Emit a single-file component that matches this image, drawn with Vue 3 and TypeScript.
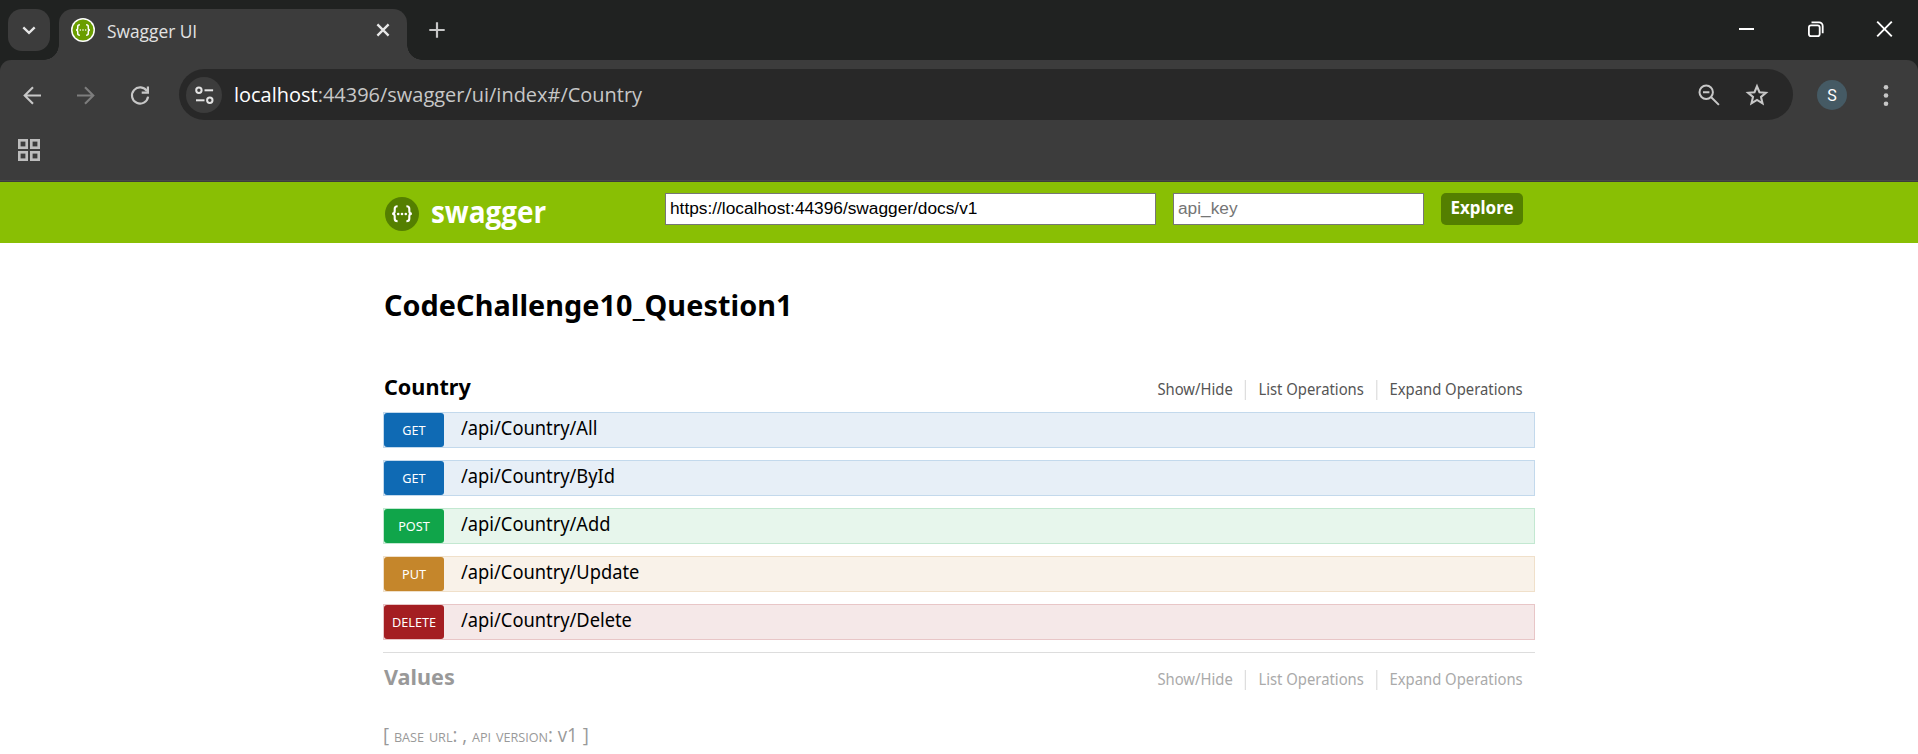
<script setup lang="ts">
interface Operation {
  method: 'get' | 'post' | 'put' | 'delete'
  path: string
}

const operations: Operation[] = [
  { method: 'get', path: '/api/Country/All' },
  { method: 'get', path: '/api/Country/ById' },
  { method: 'post', path: '/api/Country/Add' },
  { method: 'put', path: '/api/Country/Update' },
  { method: 'delete', path: '/api/Country/Delete' },
]

const options: string[] = ['Show/Hide', 'List Operations', 'Expand Operations']
const docsUrl: string = 'https://localhost:44396/swagger/docs/v1'
</script>

<template>
  <div class="window">
    <div class="tabstrip">
      <div class="tab-search">
        <svg width="24" height="24" viewBox="0 0 24 24" fill="none" stroke="#e6e6e6" stroke-width="2.3">
          <path d="M6.3 9.3 12 14.8l5.7-5.5" />
        </svg>
      </div>
      <div class="tab">
        <svg width="24" height="24" viewBox="0 0 24 24">
          <circle cx="12" cy="12" r="12" fill="#fff" />
          <circle cx="12" cy="12" r="10.5" fill="#6a9e00" />
          <g fill="none" stroke="#fff" stroke-width="1.5">
            <path d="M8.900 6.700c-1.800 0-2.200.5-2.200 2v1.500c0 1.200-.4 1.800-1.700 1.800 1.300 0 1.700.6 1.700 1.800v1.500c0 1.500.4 2 2.200 2" />
            <path d="M15.100 6.700c1.800 0 2.200.5 2.200 2v1.500c0 1.200.4 1.800 1.700 1.800-1.300 0-1.700.6-1.700 1.800v1.500c0 1.500-.4 2-2.200 2" />
          </g>
          <g fill="#fff">
            <circle cx="9.3" cy="12" r=".8" /><circle cx="12" cy="12" r=".8" /><circle cx="14.7" cy="12" r=".8" />
          </g>
        </svg>
        <span class="tab-title">Swagger UI</span>
        <svg width="24" height="24" viewBox="0 0 24 24" stroke="#e8e8e8" stroke-width="2.3">
          <path d="m6.400 6.400 11.200 11.200M17.600 6.400 6.400 17.600" />
        </svg>
      </div>
      <svg class="new-tab" width="24" height="24" viewBox="0 0 24 24" stroke="#c7c7c7" stroke-width="2.2">
        <path d="M12 4.300v15.400M4.300 12h15.400" />
      </svg>
      <div class="window-buttons">
        <svg width="24" height="24" viewBox="0 0 24 24" stroke="#fff" stroke-width="2">
          <path d="M4 12h15" />
        </svg>
        <svg width="24" height="24" viewBox="0 0 24 24" fill="none" stroke="#fff" stroke-width="1.8">
          <rect x="4.900" y="8.400" width="10.800" height="10.700" rx="2.200" />
          <path d="M7.500 5.400h7.600a3.600 3.600 0 0 1 3.600 3.600v7.300" />
        </svg>
        <svg width="24" height="24" viewBox="0 0 24 24" stroke="#fff" stroke-width="1.9">
          <path d="m4.200 4.700 14.600 14.600M18.800 4.700 4.200 19.300" />
        </svg>
      </div>
    </div>

    <div class="chrome">
      <div class="toolbar">
        <svg width="24" height="24" viewBox="0 0 24 24" fill="none" stroke="#c7c7c7" stroke-width="2.1">
          <path d="M21 12.500H4.600M13 4.200 4.700 12.500l8.300 8.300" />
        </svg>
        <svg width="24" height="24" viewBox="0 0 24 24" fill="none" stroke="#7d7d7d" stroke-width="2.1">
          <path d="M3 12.500h16.400M11 4.200l8.300 8.300-8.300 8.300" />
        </svg>
        <svg width="24" height="24" viewBox="0 0 24 24" fill="none" stroke="#c7c7c7" stroke-width="2.2">
          <path d="M20.100 13.700A8.100 8.100 0 1 1 19 8.300" />
          <path d="M19.900 3.600v6h-6.200" />
        </svg>
        <div class="omnibox">
          <div class="site-info">
            <svg width="24" height="24" viewBox="0 0 24 24" fill="none" stroke="#e3e3e3" stroke-width="2">
              <circle cx="6.900" cy="7.300" r="2.700" /><path d="M12.500 7.300h8.600" />
              <circle cx="17.800" cy="17.300" r="2.700" /><path d="M4 17.300h8.500" />
            </svg>
          </div>
          <div class="url"><span class="host">localhost</span>:44396/swagger/ui/index#/Country</div>
          <svg width="24" height="24" viewBox="0 0 24 24" fill="none" stroke="#c7c7c7" stroke-width="2">
            <circle cx="9.200" cy="9.200" r="6.700" /><path d="m14 14 7.900 7.900M6 9.200h6.400" />
          </svg>
          <svg class="star" width="24" height="24" viewBox="0 0 24 24" fill="none" stroke="#c7c7c7" stroke-width="2.1">
            <path d="m12 3.300 2.500 5.900 6.400.6-4.900 4.200 1.500 6.300-5.500-3.400-5.500 3.400 1.500-6.300-4.900-4.200 6.400-.6z" />
          </svg>
        </div>
        <div class="avatar">S</div>
        <svg class="menu" width="24" height="24" viewBox="0 0 24 24" fill="#c7c7c7">
          <circle cx="12" cy="4.200" r="2.300" /><circle cx="12" cy="12.500" r="2.300" /><circle cx="12" cy="20.800" r="2.300" />
        </svg>
      </div>
      <div class="bookmarks">
        <svg width="22" height="22" viewBox="0 0 22 22" fill="none" stroke="#bdbdbd" stroke-width="2.6">
          <rect x="1.300" y="1.300" width="7.400" height="7.400" /><rect x="13.300" y="1.300" width="7.400" height="7.400" />
          <rect x="1.300" y="13.300" width="7.400" height="7.400" /><rect x="13.300" y="13.300" width="7.400" height="7.400" />
        </svg>
      </div>
    </div>

    <div class="page">
      <header class="header">
        <div class="container header-row">
          <div class="logo">
            <svg width="34" height="34" viewBox="0 0 34 34">
              <circle cx="17" cy="17" r="17" fill="#547f00" />
              <g fill="none" stroke="#fff" stroke-width="2.1">
                <path d="M12.600 9.300c-2.300 0-2.900.6-2.900 2.500v2.500c0 1.700-.7 2.500-2.600 2.500 1.900 0 2.600.8 2.600 2.500v2.500c0 1.900.6 2.500 2.900 2.500" />
                <path d="M21.400 9.300c2.300 0 2.900.6 2.900 2.500v2.500c0 1.700.7 2.500 2.600 2.500-1.900 0-2.600.8-2.600 2.500v2.500c0 1.900-.6 2.500-2.900 2.500" />
              </g>
              <g fill="#fff">
                <circle cx="13.200" cy="17" r="1.300" /><circle cx="17" cy="17" r="1.300" /><circle cx="20.800" cy="17" r="1.300" />
              </g>
            </svg>
            <span>swagger</span>
          </div>
          <input class="field base-url" type="text" :value="docsUrl" />
          <input class="field api-key" type="text" placeholder="api_key" />
          <a class="explore">Explore</a>
        </div>
      </header>

      <main class="container">
        <h1 class="title">CodeChallenge10_Question1</h1>

        <section class="resource">
          <div class="heading">
            <h2>Country</h2>
            <ul class="options"><li v-for="o in options" :key="o">{{ o }}</li></ul>
          </div>
          <div v-for="op in operations" :key="op.path" class="operation" :class="op.method">
            <span class="method">{{ op.method.toUpperCase() }}</span>
            <span class="path">{{ op.path }}</span>
          </div>
        </section>

        <section class="resource collapsed">
          <div class="heading">
            <h2>Values</h2>
            <ul class="options"><li v-for="o in options" :key="o">{{ o }}</li></ul>
          </div>
        </section>

        <footer class="footer">[ <span class="caps">base url</span>: , <span class="caps">api version</span>: v1 ]</footer>
      </main>
    </div>
  </div>
</template>

<style>
body { margin: 0; overflow: hidden; background: #fff; }
</style>

<style scoped>
.window { display: flex; flex-direction: column; height: 754px; overflow: hidden; background: #202221; font-family: "Open Sans", "Noto Sans", sans-serif; }
svg { display: block; flex: none; }

.tabstrip { display: flex; flex: none; align-items: flex-start; height: 60px; box-sizing: border-box; padding: 9px 14px 0 8px; }
.tab-search { display: flex; align-items: center; justify-content: center; width: 42px; height: 42px; border-radius: 14px; background: #3c3c3c; }
.tab { position: relative; display: flex; align-items: center; box-sizing: border-box; width: 348px; height: 51px; margin-left: 9px; padding: 0 12px 9px; border-radius: 14px 14px 0 0; background: #3c3c3c; }
.tab::before, .tab::after { content: ""; position: absolute; bottom: 0; width: 15px; height: 15px; }
.tab::before { right: 100%; background: radial-gradient(circle at 0 0, transparent 14.5px, #3c3c3c 15px); }
.tab::after { left: 100%; background: radial-gradient(circle at 100% 0, transparent 14.5px, #3c3c3c 15px); }
.tab-title { flex: 1; margin: 2px 0 0 12px; color: #e3e3e3; font-size: 18px; line-height: 24px; transform: scaleX(.963); transform-origin: 0 50%; }
.new-tab { margin: 9px 0 0 18px; }
.window-buttons { display: flex; gap: 45px; margin: 8px 7px 0 auto; }

.chrome { flex: none; height: 122px; border-radius: 11px 11px 0 0; background: #3c3c3c; }
.toolbar { display: flex; align-items: center; height: 69px; padding-left: 20px; gap: 30px; }
.omnibox { display: flex; align-items: center; box-sizing: border-box; width: 1614px; height: 51px; margin-left: -3px; padding: 0 24px 0 7px; border-radius: 26px; background: #282828; }
.site-info { display: flex; align-items: center; justify-content: center; width: 36px; height: 36px; border-radius: 50%; background: #3c3c3c; }
.url { flex: 1; margin: -2px 0 0 12px; color: #c7c7c7; font-size: 20.5px; line-height: 30px; transform: scaleX(.974); transform-origin: 0 50%; }
.host { color: #fff; }
.star { margin-left: 24px; }
.avatar { width: 30px; height: 30px; margin-left: -6px; border-radius: 50%; background: #455a64; color: #fff; font: 16px/31px Roboto, sans-serif; text-align: center; }
.menu { margin-left: -3px; }
.bookmarks { height: 41px; padding: 10px 0 0 18px; border-bottom: 1px solid #484848; }

.page { flex: 1; min-height: 0; overflow: hidden; background: #fff; font-family: "Noto Sans", "Open Sans", sans-serif; }
.container { width: 1152px; margin: 0 auto; }
.header { height: 61px; background: #89bf04; }
.header-row { display: flex; align-items: flex-start; padding-top: 11px; }
.logo { display: flex; box-sizing: border-box; width: 282px; padding: 4px 0 0 2px; color: #fff; font-family: "Open Sans", sans-serif; font-size: 30px; font-weight: 700; line-height: 34px; }
.logo span { margin: -2px 0 0 12px; transform: scaleX(.93); transform-origin: 0 50%; }
.field { box-sizing: border-box; height: 32px; border: 1px solid #767676; border-radius: 0; padding: 0 4px 2px; background: #fff; color: #000; font: 17.3px "Liberation Sans", Arial, sans-serif; outline: none; }
.field::placeholder { color: #757575; }
.base-url { width: 491px; }
.api-key { width: 251px; margin-left: 17px; }
.explore { width: 82px; height: 32px; margin-left: 17px; border-radius: 5px; background: #547f00; color: #fff; font-size: 17px; font-weight: 700; line-height: 30px; text-align: center; }

.title { margin: 42px 0 0; padding-left: 1px; font-size: 28.8px; font-weight: 700; letter-spacing: .06px; line-height: 40px; }
.resource { margin-top: 47px; }
.heading { display: flex; align-items: baseline; justify-content: space-between; height: 30px; }
h2 { margin: 0; padding-left: 1px; font-size: 21.6px; font-weight: 700; line-height: 30px; }
.options { display: flex; margin: 0; padding: 0; list-style: none; color: #555; font-size: 16.8px; line-height: 17px; transform: translateX(-12px) scaleX(.883); transform-origin: 100% 50%; }
.options li { padding: 0 14px 3px; border-left: 1px solid #d0d0d0; }
.options li:first-child { border-left: 0; }
.options li:last-child { padding-right: 0; }
.operation { display: flex; box-sizing: border-box; height: 36px; margin-top: 12px; border: 1px solid; }
.heading + .operation { margin-top: 10px; }
.method { width: 60px; height: 34px; border-radius: 3px; color: #fff; font-size: 12.7px; line-height: 35px; text-align: center; }
.path { margin-left: 17px; color: #000; font-size: 19.2px; line-height: 29px; transform: scaleX(.953); transform-origin: 0 50%; }
.get { border-color: #c3d9ec; background: #e7eff7; }
.get .method { background: #0f6ab4; }
.post { border-color: #c3e8d1; background: #e7f6ec; }
.post .method { background: #10a54a; }
.put { border-color: #f0e0ca; background: #f9f2e9; }
.put .method { background: #c5862b; }
.delete { border-color: #e8c6c7; background: #f5e8e8; }
.delete .method { background: #a41e22; }
.collapsed { margin-top: 12px; padding-top: 9px; border-top: 1px solid #ddd; }
.collapsed h2 { color: #999; }
.collapsed .options { color: #aaa; }
.footer { margin-top: 28px; color: #999; font-family: "Open Sans", sans-serif; font-size: 19.2px; line-height: 30px; transform: scaleX(.972); transform-origin: 0 50%; }
.caps { font-variant: small-caps; }
</style>
